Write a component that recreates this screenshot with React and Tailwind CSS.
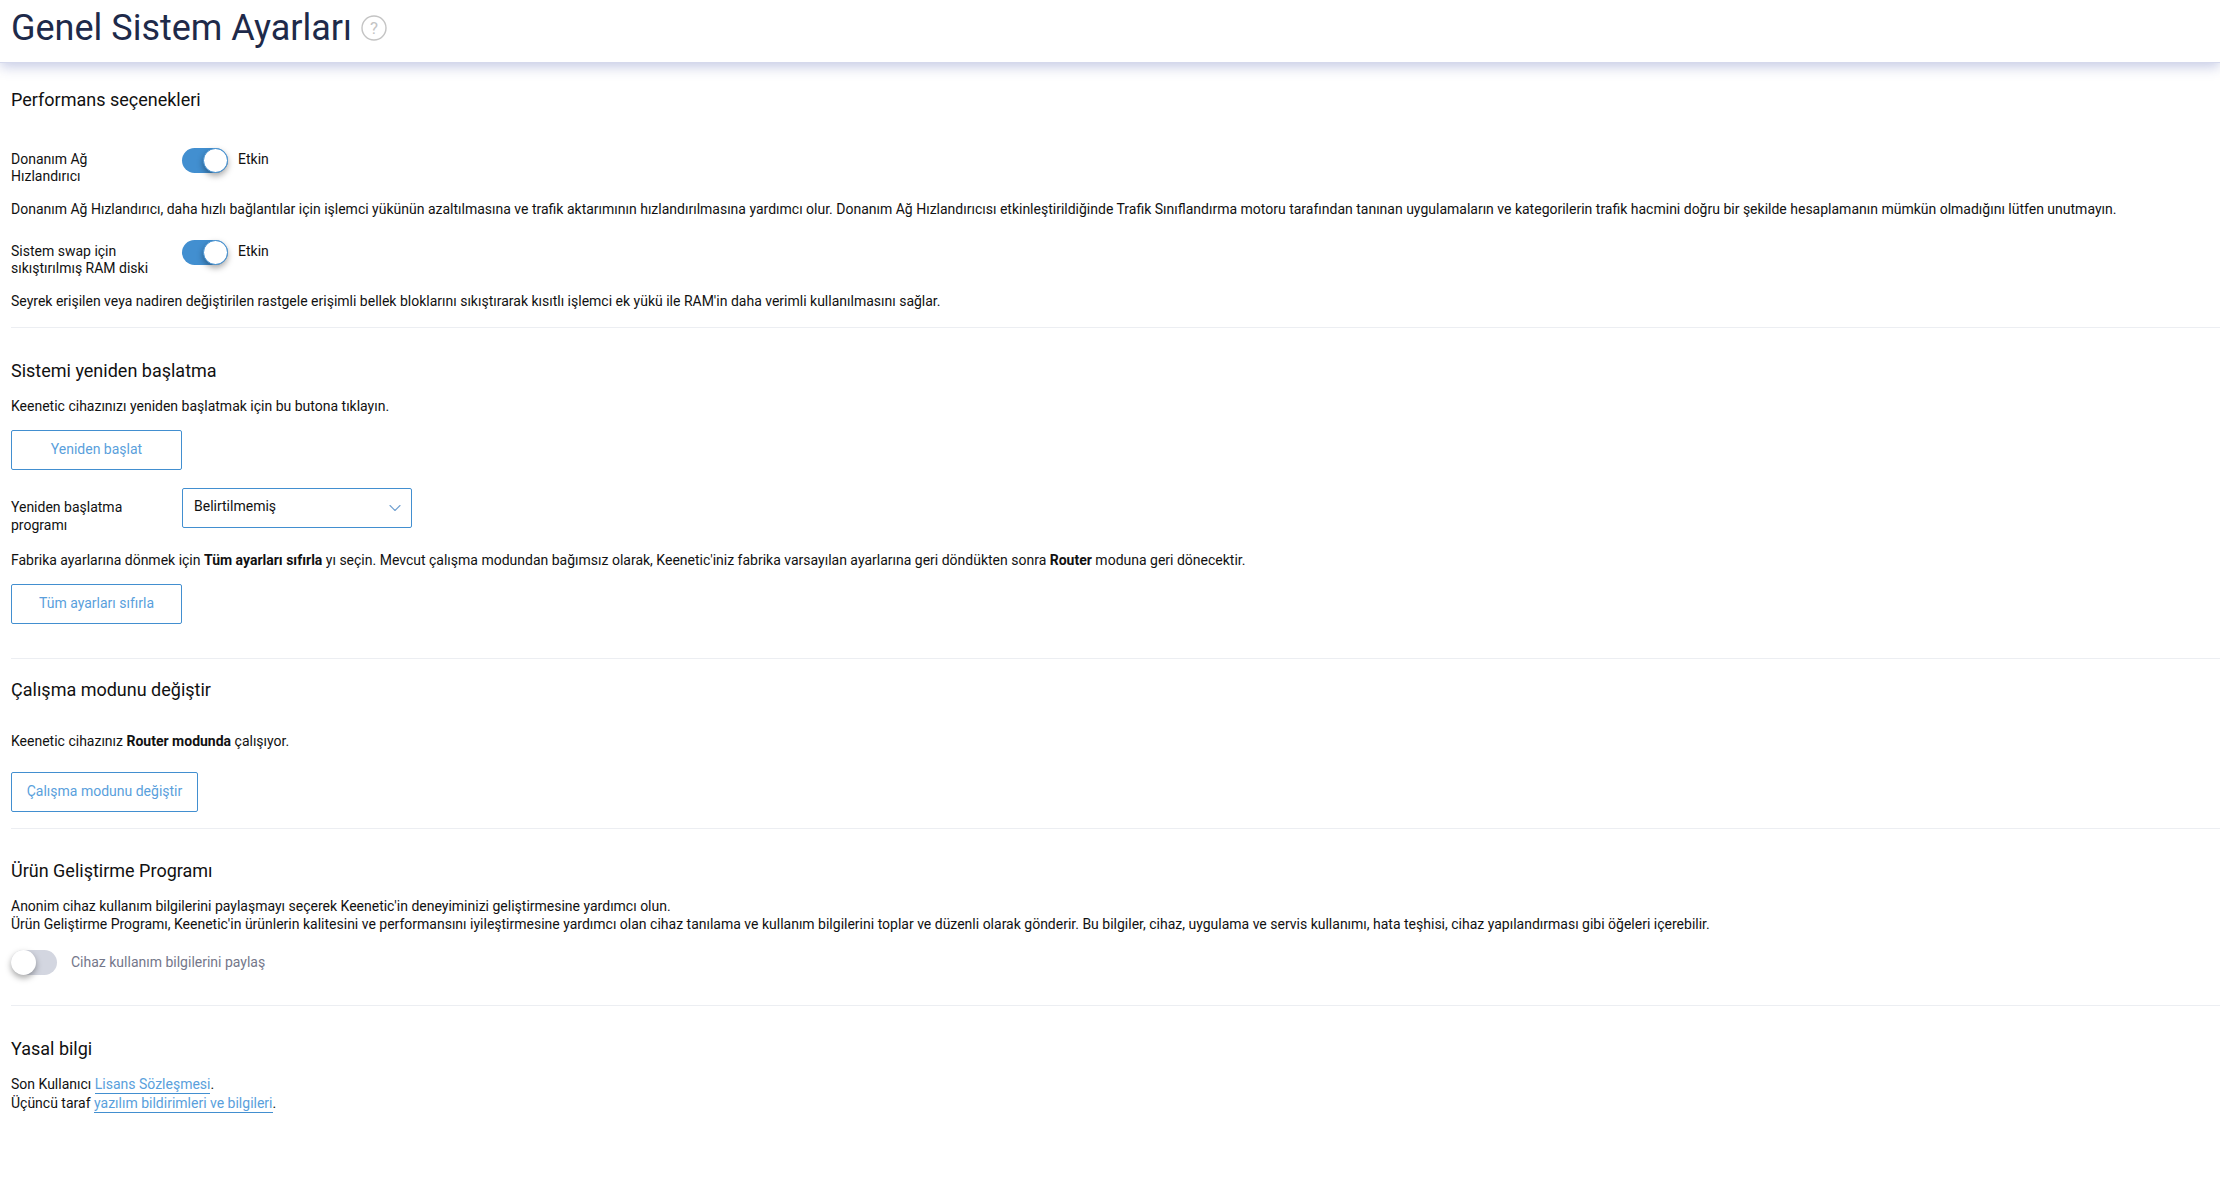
import { ChevronDown } from 'lucide-react'

const Toggle = ({ on }) => (
  <span className={`relative block w-[46px] h-[25px] rounded-full shrink-0 ${on ? 'bg-[#428fd0]' : 'bg-[#d3d6e0]'}`}>
    <span className={`absolute top-0 w-[25px] h-[25px] rounded-full bg-white shadow-[0_3px_6px_rgba(0,0,0,0.35)] ${on ? 'right-0 border border-[#428fd0]' : 'left-0'}`} />
  </span>
)

const OutlineButton = ({ children, className }) => (
  <button className={`block h-10 border border-[#428fd0] rounded-[2px] text-[14px] leading-[36px] pb-1 text-center text-[#5a9fdc] ${className}`}>
    {children}
  </button>
)

const SectionTitle = ({ children, className }) => (
  <h2 className={`text-[18px] leading-[24px] text-[#111] ${className}`}>{children}</h2>
)

const ToggleRow = ({ label, className }) => (
  <div className={`flex items-start ${className}`}>
    <div className="w-[171px] pr-6 leading-[17px] pt-[3px] h-[38px]">{label}</div>
    <Toggle on />
    <span className="ml-[10px] leading-[25px] -mt-[1px]">Etkin</span>
  </div>
)

export default function App() {
  return (
    <div className="min-h-[1185px] bg-white text-[14px] text-[#111] font-['Roboto',sans-serif]">
      <header className="h-[63px] flex items-center pl-[11px] pb-[7px] shadow-[0_4px_12px_rgba(70,85,170,0.3)] border-b border-[#d5d9ec]">
        <h1 className="text-[36px] leading-[54px] text-[#1e2a4a]">Genel Sistem Ayarları</h1>
        <svg width="26" height="26" viewBox="0 0 26 26" className="ml-[9px]" fill="none">
          <circle cx="13" cy="13" r="12" stroke="#c4c4c4" strokeWidth="1.4" />
          <text x="13" y="19" textAnchor="middle" fontSize="17" fill="#c4c4c4" fontFamily="Roboto">?</text>
        </svg>
      </header>

      <main className="pl-[11px]">
        <section className="pt-[25px] h-[265px] border-b border-[#eceef2]">
          <SectionTitle>Performans seçenekleri</SectionTitle>
          <ToggleRow className="mt-[36px]" label={<>Donanım Ağ<br />Hızlandırıcı</>} />
          <p className="mt-[14px] leading-[18px]">Donanım Ağ Hızlandırıcı, daha hızlı bağlantılar için işlemci yükünün azaltılmasına ve trafik aktarımının hızlandırılmasına yardımcı olur. Donanım Ağ Hızlandırıcısı etkinleştirildiğinde Trafik Sınıflandırma motoru tarafından tanınan uygulamaların ve kategorilerin trafik hacmini doğru bir şekilde hesaplamanın mümkün olmadığını lütfen unutmayın.</p>
          <ToggleRow className="mt-[22px]" label={<>Sistem swap için<br />sıkıştırılmış RAM diski</>} />
          <p className="mt-[14px] leading-[18px]">Seyrek erişilen veya nadiren değiştirilen rastgele erişimli bellek bloklarını sıkıştırarak kısıtlı işlemci ek yükü ile RAM'in daha verimli kullanılmasını sağlar.</p>
        </section>

        <section className="pt-[31px] h-[331px] border-b border-[#eceef2]">
          <SectionTitle>Sistemi yeniden başlatma</SectionTitle>
          <p className="mt-[14px] leading-[18px]">Keenetic cihazınızı yeniden başlatmak için bu butona tıklayın.</p>
          <OutlineButton className="w-[171px] mt-[15px]">Yeniden başlat</OutlineButton>
          <div className="flex items-start mt-[18px]">
            <div className="w-[171px] pt-[10px] leading-[18px]">Yeniden başlatma<br />programı</div>
            <div className="w-[230px] h-10 border border-[#428fd0] rounded-[2px] flex items-center justify-between pl-[11px] pr-[6px]">
              <span className="pb-[3px]">Belirtilmemiş</span>
              <ChevronDown size={20} strokeWidth={1.3} className="text-[#6f9fd0]" />
            </div>
          </div>
          <p className="mt-[17px] leading-[18px]">Fabrika ayarlarına dönmek için <b>Tüm ayarları sıfırla</b> yı seçin. Mevcut çalışma modundan bağımsız olarak, Keenetic'iniz fabrika varsayılan ayarlarına geri döndükten sonra <b>Router</b> moduna geri dönecektir.</p>
          <OutlineButton className="w-[171px] mt-[15px]">Tüm ayarları sıfırla</OutlineButton>
        </section>

        <section className="pt-[19px] h-[170px] border-b border-[#eceef2]">
          <SectionTitle>Çalışma modunu değiştir</SectionTitle>
          <p className="mt-[30px] leading-[18px]">Keenetic cihazınız <b>Router modunda</b> çalışıyor.</p>
          <OutlineButton className="w-[187px] mt-[22px]">Çalışma modunu değiştir</OutlineButton>
        </section>

        <section className="pt-[30px] h-[177px] border-b border-[#eceef2]">
          <SectionTitle>Ürün Geliştirme Programı</SectionTitle>
          <p className="mt-[14px] leading-[18px]">
            Anonim cihaz kullanım bilgilerini paylaşmayı seçerek Keenetic'in deneyiminizi geliştirmesine yardımcı olun.<br />
            Ürün Geliştirme Programı, Keenetic'in ürünlerin kalitesini ve performansını iyileştirmesine yardımcı olan cihaz tanılama ve kullanım bilgilerini toplar ve düzenli olarak gönderir. Bu bilgiler, cihaz, uygulama ve servis kullanımı, hata teşhisi, cihaz yapılandırması gibi öğeleri içerebilir.
          </p>
          <div className="flex items-center mt-[17px] h-[25px]">
            <Toggle />
            <span className="ml-[14px] text-[#74778a]">Cihaz kullanım bilgilerini paylaş</span>
          </div>
        </section>

        <section className="pt-[31px]">
          <SectionTitle>Yasal bilgi</SectionTitle>
          <p className="mt-[14px] leading-[19px]">
            Son Kullanıcı <a className="text-[#5a9fdc] border-b border-[#428fd0] pb-[1px]">Lisans Sözleşmesi</a>.<br />
            Üçüncü taraf <a className="text-[#5a9fdc] border-b border-[#428fd0] pb-[1px]">yazılım bildirimleri ve bilgileri</a>.
          </p>
        </section>
      </main>
    </div>
  )
}
